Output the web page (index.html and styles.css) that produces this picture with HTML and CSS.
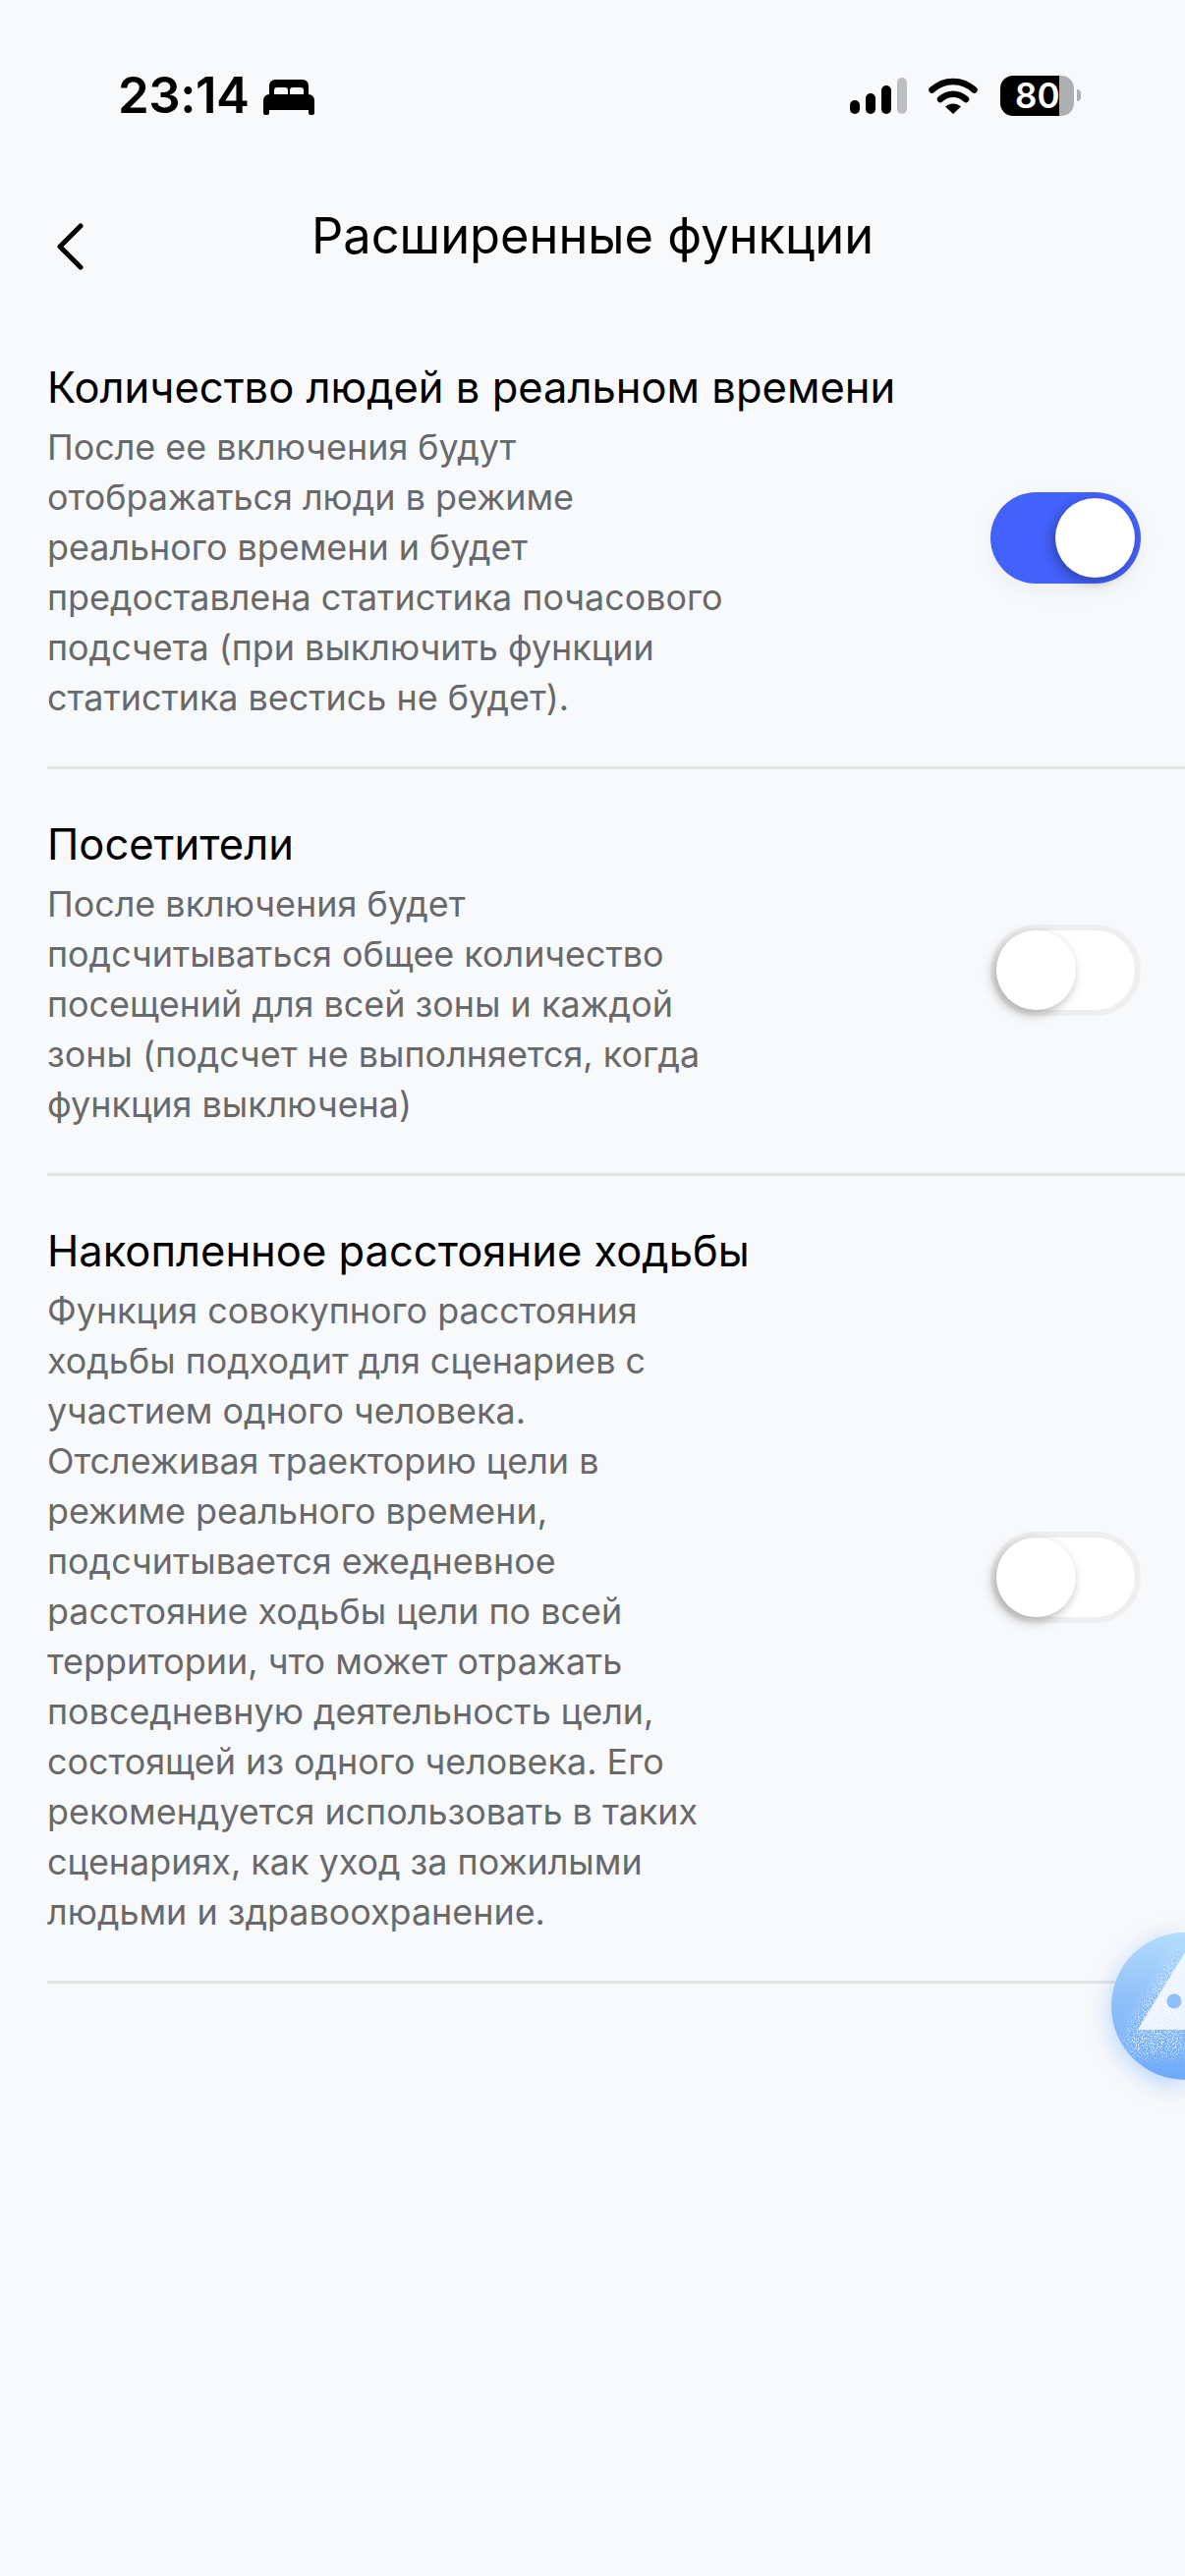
FILE: index.html
```html
<!DOCTYPE html>
<html lang="ru">
<head>
    <meta charset="UTF-8">
    <meta name="viewport" content="width=device-width, initial-scale=1.0">
    <title>Расширенные функции</title>
    <link rel="stylesheet" href="styles.css">
</head>
<body>
    <div class="status-bar">
        <div class="status-left">
            <span class="time">23:14</span>
            <svg class="bed-icon" width="52" height="36" viewBox="0 0 52 36">
                <path d="M6 15V6a6 6 0 0 1 6-6h28a6 6 0 0 1 6 6v9h-5v-4a3 3 0 0 0-3-3h-8a3 3 0 0 0-3 3v4h-2v-4a3 3 0 0 0-3-3h-8a3 3 0 0 0-3 3v4z" fill="#000"/>
                <path d="M6 15h40a6 6 0 0 1 6 6v13a2 2 0 0 1-2 2h-2a2 2 0 0 1-2-2v-3H6v3a2 2 0 0 1-2 2H2a2 2 0 0 1-2-2V21a6 6 0 0 1 6-6z" fill="#000"/>
            </svg>
        </div>
        <div class="status-right">
            <div class="signal">
                <span class="bar bar-1"></span>
                <span class="bar bar-2"></span>
                <span class="bar bar-3"></span>
                <span class="bar bar-4"></span>
            </div>
            <svg class="wifi-icon" width="50" height="38" viewBox="0 0 50 38">
                <path d="M3.5 13.5C16 2 34 2 46.5 13.5M12 23c8-7 18-7 26 0" fill="none" stroke="#000" stroke-width="6.5" stroke-linecap="round"/>
                <path d="M17 30.5c5-4 11-4 16 0L25 38z" fill="#000"/>
            </svg>
            <div class="battery">
                <div class="battery-body"><span class="battery-level">80</span></div>
                <span class="battery-nub"></span>
            </div>
        </div>
    </div>

    <div class="nav-bar">
        <svg class="back-icon" width="30" height="50" viewBox="0 0 30 50">
            <path d="M26 4L5 25l21 21" fill="none" stroke="#000" stroke-width="5" stroke-linecap="round" stroke-linejoin="round"/>
        </svg>
        <h1>Расширенные функции</h1>
    </div>

    <div class="feature-list">
        <div class="feature">
            <div class="feature-text">
                <h2>Количество людей в реальном времени</h2>
                <p>После ее включения будут<br>отображаться люди в режиме<br>реального времени и будет<br>предоставлена статистика почасового<br>подсчета (при выключить функции<br>статистика вестись не будет).</p>
            </div>
            <div class="switch switch-on"><span class="knob"></span></div>
        </div>
        <div class="feature">
            <div class="feature-text">
                <h2>Посетители</h2>
                <p>После включения будет<br>подсчитываться общее количество<br>посещений для всей зоны и каждой<br>зоны (подсчет не выполняется, когда<br>функция выключена)</p>
            </div>
            <div class="switch"><span class="knob"></span></div>
        </div>
        <div class="feature">
            <div class="feature-text">
                <h2>Накопленное расстояние ходьбы</h2>
                <p>Функция совокупного расстояния<br>ходьбы подходит для сценариев с<br>участием одного человека.<br>Отслеживая траекторию цели в<br>режиме реального времени,<br>подсчитывается ежедневное<br>расстояние ходьбы цели по всей<br>территории, что может отражать<br>повседневную деятельность цели,<br>состоящей из одного человека. Его<br>рекомендуется использовать в таких<br>сценариях, как уход за пожилыми<br>людьми и здравоохранение.</p>
            </div>
            <div class="switch"><span class="knob"></span></div>
        </div>
    </div>

    <!-- плавающая кнопка у правого края -->
    <div class="float-ball">
        <svg width="75" height="150" viewBox="0 0 75 150">
            <defs>
                <filter id="speckle" x="0" y="0" width="100%" height="100%" filterUnits="userSpaceOnUse">
                    <feTurbulence type="fractalNoise" baseFrequency="0.8" numOctaves="2" seed="4"/>
                    <feColorMatrix values="0 0 0 0 1  0 0 0 0 1  0 0 0 0 1  0 0 0 10 -5.2"/>
                    <feComposite in2="SourceGraphic" operator="in"/>
                </filter>
                <filter id="soft">
                    <feGaussianBlur stdDeviation="6"/>
                </filter>
            </defs>
            <g filter="url(#speckle)">
                <path d="M70 10L12 104l8 22h55z" fill="#fff" fill-opacity="0.7" filter="url(#soft)"/>
            </g>
            <path d="M75 20L27 99h48z" fill="#fff" fill-opacity="0.82"/>
            <circle cx="64" cy="70" r="7.5" fill="#8fc0fb"/>
        </svg>
    </div>
</body>
</html>
```

FILE: styles.css
```css
* {
    box-sizing: border-box;
}

html, body {
    height: 100%;
}

body {
    margin: 0;
    background-color: #f8f9fb;
    font-family: Inter, "Noto Sans", sans-serif;
    color: #000;
    overflow: hidden;
    position: relative;
}

.status-bar {
    display: flex;
    justify-content: space-between;
    align-items: center;
    height: 80px;
    margin-top: 57px;
    padding: 0 106px 0 120px;
}

.status-left {
    display: flex;
    align-items: center;
    gap: 14px;
}

.time {
    font-size: 51px;
    line-height: 60px;
    font-weight: 600;
    letter-spacing: -0.5px;
}

.bed-icon {
    margin-top: 3px;
}

.status-right {
    display: flex;
    align-items: center;
}

.signal {
    display: flex;
    align-items: flex-end;
    gap: 6px;
    height: 37px;
    margin-right: 22px;
}

.bar {
    width: 10px;
    border-radius: 5px;
    background-color: #000;
}

.bar-1 { height: 14px; }
.bar-2 { height: 21px; }
.bar-3 { height: 29px; }
.bar-4 { height: 37px; background-color: #bdbec0; }

.wifi-icon {
    margin-right: 23px;
}

.battery {
    display: flex;
    align-items: center;
    gap: 3px;
}

.battery-body {
    width: 75px;
    height: 41px;
    border-radius: 13px;
    background: linear-gradient(to right, #000 60px, #aeafb0 60px);
}

.battery-level {
    display: block;
    padding-left: 15px;
    color: #fff;
    font-size: 35px;
    line-height: 41px;
    font-weight: 600;
}

.battery-nub {
    width: 4px;
    height: 12px;
    border-radius: 0 6px 6px 0;
    background-color: #aeafb0;
}

.nav-bar {
    display: flex;
    align-items: center;
    justify-content: center;
    position: relative;
    margin-top: 72px;
    height: 62px;
}

.back-icon {
    position: absolute;
    left: 56px;
    top: 17px;
}

h1 {
    margin: 0;
    font-size: 50.6px;
    line-height: 62px;
    font-weight: 400;
}

.feature-list {
    margin-top: 47px;
    margin-left: 48px;
}

.feature {
    display: flex;
    justify-content: space-between;
    align-items: center;
    padding: 50px 45px 44px 0;
    border-bottom: 3px solid #e3e4e4;
}

h2 {
    margin: 0 0 10px;
    font-size: 43.5px;
    line-height: 52px;
    font-weight: 400;
}

p {
    margin: 0;
    font-size: 35.9px;
    line-height: 51px;
    color: #68696b;
}

.switch {
    flex: none;
    width: 153px;
    height: 93px;
    margin-bottom: 9px;
    border-radius: 47px;
    background-color: #fff;
    border: 6px solid #eeeff0;
    position: relative;
}

.switch-on {
    background-color: #4361fb;
    border: none;
    box-shadow: 0 6px 24px rgba(0, 0, 0, 0.05);
}

.knob {
    display: block;
    position: absolute;
    left: 0;
    top: 0;
    width: 81px;
    height: 81px;
    border-radius: 50%;
    background-color: #fff;
    box-shadow: -3px 4px 12px rgba(0, 0, 0, 0.3);
}

.switch-on .knob {
    left: 66px;
    top: 6px;
}

.float-ball {
    position: absolute;
    left: 1131px;
    top: 1967px;
    width: 75px;
    height: 150px;
    border-radius: 75px 0 0 75px;
    background: linear-gradient(to bottom, #b4dcfc 0%, #8fc0f9 45%, #6ea9f7 100%);
    box-shadow: 0 6px 24px rgba(90, 160, 250, 0.45);
}
```
